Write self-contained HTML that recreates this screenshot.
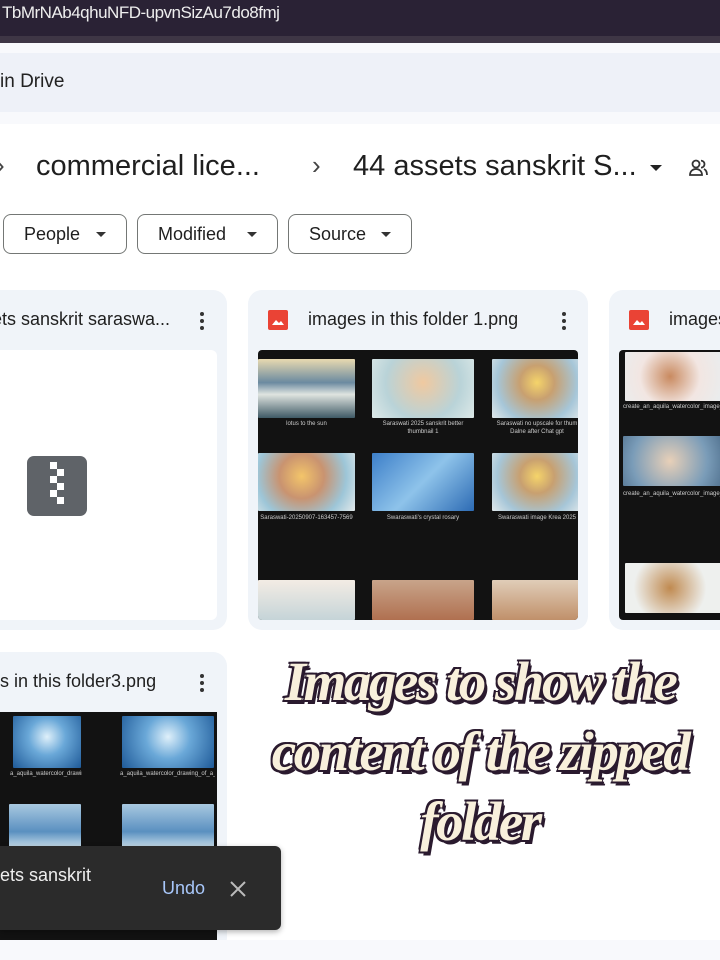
<!DOCTYPE html>
<html><head><meta charset="utf-8">
<style>
*{margin:0;padding:0;box-sizing:border-box}
body{width:720px;height:960px;overflow:hidden;background:#fff;font-family:"Liberation Sans",sans-serif;position:relative;color:#1f1f1f}
.a{position:absolute}
.chip{position:absolute;top:214px;height:40px;border:1px solid #747775;border-radius:8px;font-size:18px;color:#1f1f1f;line-height:38px;padding-left:20px}
.chip:after{content:"";position:absolute;right:20px;top:17px;border-left:5px solid transparent;border-right:5px solid transparent;border-top:5px solid #333}
.card{position:absolute;background:#f0f4f9;border-radius:14px}
.dots{position:absolute;width:4px}
.dots i{display:block;width:4px;height:4px;border-radius:2px;background:#333;margin-bottom:3px}
.t{position:absolute;border-radius:1px}
.cap{position:absolute;color:#ccc;font-size:6px;text-align:center;line-height:8px;overflow:hidden}
.big{position:absolute;left:240px;width:480px;text-align:center;font-family:"Liberation Serif",serif;font-style:italic;font-weight:bold;font-size:55px;color:#f8f0dc;-webkit-text-stroke:2px #2a1a2e;paint-order:stroke fill;text-shadow:2px 2px 0 #2a1a2e,-2px 2px 0 #2a1a2e,2px -2px 0 #2a1a2e,-2px -2px 0 #2a1a2e,3px 4px 0 #2a1a2e;letter-spacing:-2.5px;white-space:nowrap}
</style></head><body>
<div class="a" style="left:0;top:0;width:720px;height:36px;background:#2a2235"></div>
<div class="a" style="left:0;top:36px;width:720px;height:7px;background:#3e3645"></div>
<div class="a" style="left:2px;top:3px;font-size:17px;color:#eee;letter-spacing:-0.5px">TbMrNAb4qhuNFD-upvnSizAu7do8fmj</div>
<div class="a" style="left:0;top:43px;width:720px;height:10px;background:#f8f9fc"></div>
<div class="a" style="left:0;top:53px;width:720px;height:59px;background:#eef1f8"></div>
<div class="a" style="left:0;top:71px;font-size:19px;color:#222">in Drive</div>
<div class="a" style="left:0;top:112px;width:720px;height:12px;background:#f8f9fc"></div>

<div class="a" style="left:-4px;top:150px;font-size:26px;color:#444">›</div>
<div class="a" style="left:36px;top:150px;font-size:29px;color:#1f1f1f">commercial lice...</div>
<div class="a" style="left:312px;top:150px;font-size:26px;color:#444">›</div>
<div class="a" style="left:353px;top:150px;font-size:29px;color:#1f1f1f">44 assets sanskrit S...</div>
<div class="a" style="left:650px;top:165px;border-left:6px solid transparent;border-right:6px solid transparent;border-top:6px solid #222"></div>
<svg class="a" style="left:688px;top:157px" width="22" height="22" viewBox="0 0 22 22" fill="none" stroke="#333" stroke-width="1.8"><circle cx="8" cy="7" r="3.5"/><path d="M2 18c0-4 3-6 6-6s6 2 6 6z"/><path d="M13 3.6a3.5 3.5 0 0 1 0 7M16 12c2 1 3 3 3 6"/></svg>

<div class="chip" style="left:3px;width:124px">People</div>
<div class="chip" style="left:137px;width:141px">Modified</div>
<div class="chip" style="left:288px;width:124px">Source</div>

<div class="card" style="left:-20px;top:290px;width:247px;height:340px"></div>
<div class="a" style="left:-8px;top:309px;font-size:18px;white-space:nowrap;width:200px;overflow:hidden">ets sanskrit saraswa...</div>
<div class="dots" style="left:200px;top:312px"><i></i><i></i><i></i></div>
<div class="a" style="left:0;top:350px;width:217px;height:270px;background:#fff;border-radius:0 6px 6px 0"></div>
<div class="a" style="left:27px;top:456px;width:60px;height:60px;background:#5f6368;border-radius:7px"></div>
<div class="a" style="left:50px;top:462px;width:7px;height:7px;background:#fff"></div>
<div class="a" style="left:57px;top:469px;width:7px;height:7px;background:#fff"></div>
<div class="a" style="left:50px;top:476px;width:7px;height:7px;background:#fff"></div>
<div class="a" style="left:57px;top:483px;width:7px;height:7px;background:#fff"></div>
<div class="a" style="left:50px;top:490px;width:7px;height:7px;background:#fff"></div>
<div class="a" style="left:57px;top:497px;width:7px;height:7px;background:#fff"></div>

<div class="card" style="left:248px;top:290px;width:340px;height:340px"></div>
<div class="a" style="left:268px;top:310px;width:20px;height:20px;background:#ea4335;border-radius:2px"></div>
<svg class="a" style="left:268px;top:310px" width="20" height="20"><path d="M4 15l4-5 3 3 2-2 3 4z" fill="#fff"/></svg>
<div class="a" style="left:308px;top:309px;font-size:18px">images in this folder 1.png</div>
<div class="dots" style="left:562px;top:312px"><i></i><i></i><i></i></div>
<div class="a" style="left:258px;top:350px;width:320px;height:270px;background:#121212;border-radius:4px;overflow:hidden">
<div class="t" style="left:0;top:9px;width:97px;height:59px;background:linear-gradient(180deg,#e8d9b0,#6b8aa0 40%,#dfe4e0 60%,#3f5a66)"></div>
<div class="t" style="left:114px;top:9px;width:102px;height:59px;background:radial-gradient(circle at 50% 40%,#f0c9a0,#b9d3d8 60%,#dde9e8)"></div>
<div class="t" style="left:234px;top:9px;width:90px;height:59px;background:radial-gradient(circle at 50% 40%,#f5d46a,#c8a070 30%,#a6c6d8 70%,#e0e8ea)"></div>
<div class="cap" style="left:0;top:70px;width:97px">lotus to the sun</div>
<div class="cap" style="left:114px;top:70px;width:102px">Saraswati 2025 sanskrit better thumbnail 1</div>
<div class="cap" style="left:234px;top:70px;width:90px">Saraswati no upscale for thum Dalne after Chat gpt</div>
<div class="t" style="left:0;top:103px;width:97px;height:58px;background:radial-gradient(circle at 45% 40%,#f3c56a,#c99370 35%,#9dc6d8 70%,#e3e9ea)"></div>
<div class="t" style="left:114px;top:103px;width:102px;height:58px;background:linear-gradient(135deg,#3d7fc9,#8ec3ea 50%,#2d6bb4)"></div>
<div class="t" style="left:234px;top:103px;width:90px;height:58px;background:radial-gradient(circle at 50% 40%,#f5d46a,#c8a070 30%,#a6c6d8 70%,#e0e8ea)"></div>
<div class="cap" style="left:0;top:164px;width:97px">Saraswati-20250907-163457-7569</div>
<div class="cap" style="left:114px;top:164px;width:102px">Swaraswati's crystal rosary</div>
<div class="cap" style="left:234px;top:164px;width:90px">Swaraswati image Krea 2025</div>
<div class="t" style="left:0;top:230px;width:97px;height:40px;background:linear-gradient(180deg,#f3ece4,#c5d4d8)"></div>
<div class="t" style="left:114px;top:230px;width:102px;height:40px;background:linear-gradient(180deg,#c8a48a,#b07050)"></div>
<div class="t" style="left:234px;top:230px;width:90px;height:40px;background:linear-gradient(180deg,#e0cdb8,#c0906a)"></div>
</div>

<div class="card" style="left:609px;top:290px;width:140px;height:340px"></div>
<div class="a" style="left:629px;top:310px;width:20px;height:20px;background:#ea4335;border-radius:2px"></div>
<svg class="a" style="left:629px;top:310px" width="20" height="20"><path d="M4 15l4-5 3 3 2-2 3 4z" fill="#fff"/></svg>
<div class="a" style="left:669px;top:309px;font-size:18px">images</div>
<div class="a" style="left:619px;top:350px;width:110px;height:270px;background:#121212;border-radius:4px;overflow:hidden">
<div class="t" style="left:6px;top:2px;width:100px;height:49px;background:radial-gradient(circle at 45% 50%,#c98a60,#f2e6e2 50%,#e8eef0)"></div>
<div class="cap" style="left:4px;top:53px;width:104px;height:32px">create_an_aquila_watercolor_image_of_the_hindu_godess_saraswati_she_has_2_arms</div>
<div class="t" style="left:4px;top:86px;width:104px;height:50px;background:radial-gradient(circle at 45% 50%,#e8d0b8,#7a9cb8 60%,#4a6a88)"></div>
<div class="cap" style="left:4px;top:140px;width:104px;height:32px">create_an_aquila_watercolor_image_of_the_hindu_godess_saraswati_four_arms</div>
<div class="t" style="left:6px;top:213px;width:100px;height:50px;background:radial-gradient(circle at 45% 50%,#c08a50,#eef0ee 60%)"></div>
</div>

<div class="card" style="left:-20px;top:652px;width:247px;height:300px"></div>
<div class="a" style="left:0;top:671px;font-size:18px">s in this folder3.png</div>
<div class="dots" style="left:200px;top:674px"><i></i><i></i><i></i></div>
<div class="a" style="left:0;top:712px;width:217px;height:230px;background:#121212;overflow:hidden">
<div class="t" style="left:13px;top:4px;width:68px;height:52px;background:radial-gradient(circle at 50% 40%,#dff0fa,#6aa8d8 40%,#1f5a98)"></div>
<div class="t" style="left:122px;top:4px;width:92px;height:52px;background:radial-gradient(circle at 50% 40%,#dff0fa,#6aa8d8 40%,#1f5a98)"></div>
<div class="cap" style="left:10px;top:58px;width:72px;height:26px">a_aquila_watercolor_drawing_of_a_large_crystal_floating_in_space</div>
<div class="cap" style="left:120px;top:58px;width:95px;height:26px">a_aquila_watercolor_drawing_of_a_large_crystal_floating_in_space</div>
<div class="t" style="left:9px;top:92px;width:72px;height:46px;background:linear-gradient(180deg,#a8c8e0,#5a90c0 60%,#d8e8f0)"></div>
<div class="t" style="left:122px;top:92px;width:92px;height:46px;background:linear-gradient(180deg,#a8c8e0,#5a90c0 60%,#d8e8f0)"></div>
</div>

<div class="a" style="left:0;top:846px;width:281px;height:84px;background:#2b2b2b;border-radius:0 6px 6px 0;box-shadow:0 2px 6px rgba(0,0,0,.3)"></div>
<div class="a" style="left:0;top:865px;font-size:18px;color:#eee">ets sanskrit</div>
<div class="a" style="left:162px;top:878px;font-size:18px;color:#a8c7fa">Undo</div>
<svg class="a" style="left:229px;top:880px" width="18" height="18" stroke="#bbb" stroke-width="2"><path d="M2 2L16 16M16 2L2 16"/></svg>

<div class="a" style="left:0;top:940px;width:720px;height:20px;background:#f8f9fc"></div>

<div class="big" style="top:650px">Images to show the</div>
<div class="big" style="top:720px">content of the zipped</div>
<div class="big" style="top:790px">folder</div>
</body></html>
